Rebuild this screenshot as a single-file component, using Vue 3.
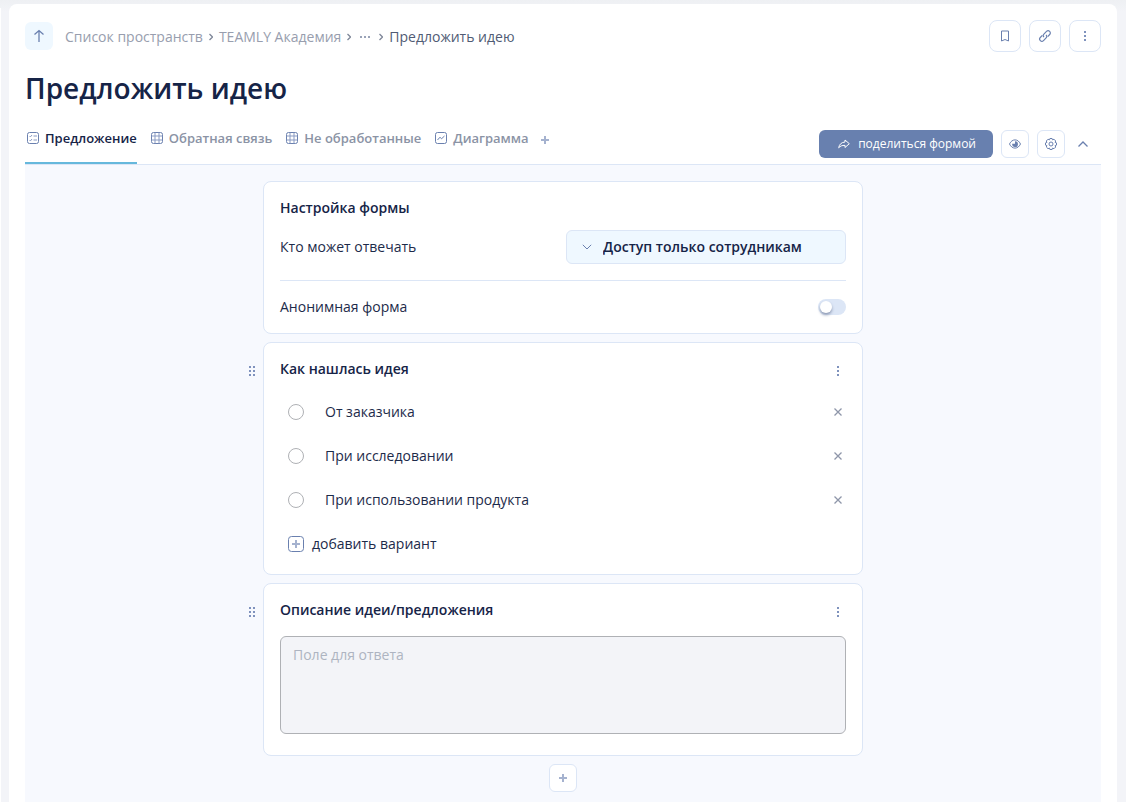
<script setup>
import { ref } from 'vue'

const tabs = [
  { name: 'Предложение', icon: 'form' },
  { name: 'Обратная связь', icon: 'table' },
  { name: 'Не обработанные', icon: 'table' },
  { name: 'Диаграмма', icon: 'chart' },
]
const active = ref(0)
const anonymous = ref(false)
const access = ref('staff')
const answer = ref('')
const found = ref('')
const options = ref(['От заказчика', 'При исследовании', 'При использовании продукта'])

function removeOption(i) {
  options.value.splice(i, 1)
}
function addOption() {
  options.value.push('Новый вариант')
}
</script>

<template>
  <div class="shell">
    <div class="sidebar-edge"></div>
    <main class="panel">
      <header class="top">
        <button class="up" type="button" aria-label="Наверх">
          <svg width="28" height="28" viewBox="0 0 28 28"><path class="medium" d="M14 20V8.500M9.500 12.500L14 8.500l4.500 4" /></svg>
        </button>
        <nav class="crumbs" aria-label="Навигация">
          <a href="#">Список пространств</a>
          <svg class="sep" width="4" height="8" viewBox="0 0 4 8"><path class="medium" d="M.5 1l3 3-3 3" /></svg>
          <a href="#">TEAMLY Академия</a>
          <svg class="sep" width="4" height="8" viewBox="0 0 4 8"><path class="medium" d="M.5 1l3 3-3 3" /></svg>
          <button class="dots" type="button" aria-label="Показать путь">
            <svg width="12" height="4" viewBox="0 0 12 4"><path d="M1 1h2v2H1zM5 1h2v2H5zM9 1h2v2H9z" /></svg>
          </button>
          <svg class="sep" width="4" height="8" viewBox="0 0 4 8"><path class="medium" d="M.5 1l3 3-3 3" /></svg>
          <a href="#" class="current">Предложить идею</a>
        </nav>
        <div class="actions">
          <button class="square" type="button" aria-label="В закладки">
            <svg width="12" height="12" viewBox="0 0 12 12"><path d="M2.500 1h7v10L6 9.500 2.500 11z" /></svg>
          </button>
          <button class="square" type="button" aria-label="Ссылка">
            <svg width="14" height="14" viewBox="0 0 14 14">
              <path class="link" d="M6 8.200c-1-1-1-2.200-.1-3.100l2.600-2.700a2.200 2.200 0 0 1 3.200 3.100L9.700 7.600" />
              <path class="link" d="M8 5.800c1 1 1 2.200.1 3.100l-2.600 2.700a2.200 2.200 0 0 1-3.200-3.100l2-2.100" />
            </svg>
          </button>
          <button class="square" type="button" aria-label="Меню">
            <svg class="solid" width="12" height="12" viewBox="0 0 12 12"><path d="M5 1h2v2H5zM5 5h2v2H5zM5 9h2v2H5z" /></svg>
          </button>
        </div>
      </header>

      <h1>Предложить идею</h1>

      <div class="tabbar">
        <div class="tabs" role="tablist">
          <button
            v-for="(tab, i) in tabs"
            :key="tab.name"
            class="tab"
            :class="{ active: i === active }"
            type="button"
            role="tab"
            :aria-selected="i === active"
            @click="active = i"
          >
            <svg v-if="tab.icon === 'form'" width="12" height="12" viewBox="0 0 12 12">
              <rect x=".5" y=".5" width="11" height="11" rx="2" />
              <path class="thin" d="M2.500 4l.9.900L5 3M2.500 8l.9.900L5 7M6.500 4H10M6.500 8H10" />
            </svg>
            <svg v-else-if="tab.icon === 'table'" width="12" height="12" viewBox="0 0 12 12">
              <rect x=".5" y=".5" width="11" height="11" rx="2" />
              <path class="thin" d="M4 .5v11M8 .5v11M.5 4h11M.5 8h11" />
            </svg>
            <svg v-else width="12" height="12" viewBox="0 0 12 12">
              <rect x=".5" y=".5" width="11" height="11" rx="2" />
              <path d="M2.500 8L5 5.200l1.500 1.600L9.500 4" />
            </svg>
            <span>{{ tab.name }}</span>
          </button>
          <button class="add-tab" type="button" aria-label="Добавить вкладку">
            <svg width="8" height="8" viewBox="0 0 8 8"><path class="plus" d="M4 0v8M0 4h8" /></svg>
          </button>
        </div>
        <div class="tools">
          <button class="share" type="button">
            <svg width="12" height="12" viewBox="0 0 12 12"><path d="M7 2l4.300 3.700L7 9.500V7.400C4 7.300 2.200 8 .7 9.800 1.200 6.500 3.300 4.300 7 4z" /></svg>
            поделиться формой
          </button>
          <button class="tool" type="button" aria-label="Просмотр">
            <svg width="12" height="12" viewBox="0 0 12 12">
              <path d="M.5 6C1.800 3.300 3.700 1.900 6 1.900S10.200 3.300 11.500 6C10.200 8.700 8.300 10.100 6 10.100S1.800 8.700.5 6z" />
              <path class="fill" d="M6 3.200v2.600H3.200A2.900 2.900 0 1 0 6 3.200z" />
            </svg>
          </button>
          <button class="tool" type="button" aria-label="Настройки">
            <svg width="12" height="12" viewBox="0 0 12 12">
              <path d="M4.900.5h2.200l.4 1.400 1.500-.7L10.700 3l-.6 1.400 1.400.5v2.200l-1.400.5.6 1.400L9 10.700l-1.500-.6-.4 1.400H4.900l-.4-1.400-1.500.6L1.300 9l.6-1.400L.5 7.100V4.900l1.400-.5L1.300 3 3 1.200l1.500.7z" />
              <circle cx="6" cy="6" r="2" />
            </svg>
          </button>
          <button class="collapse" type="button" aria-label="Свернуть">
            <svg width="12" height="12" viewBox="0 0 12 12"><path class="medium" d="M1.500 8.500L6 4l4.500 4.500" /></svg>
          </button>
        </div>
      </div>

      <section class="workspace">
        <div class="block">
          <div class="card">
            <h2>Настройка формы</h2>
            <div class="row access">
              <label for="access">Кто может отвечать</label>
              <div class="select">
                <select id="access" v-model="access">
                  <option value="staff">Доступ только сотрудникам</option>
                  <option value="all">Доступ для всех</option>
                </select>
                <svg width="10" height="6" viewBox="0 0 10 6"><path d="M.8.8L5 5 9.200.8" /></svg>
              </div>
            </div>
            <div class="row anonymous">
              <label for="anonymous">Анонимная форма</label>
              <input id="anonymous" v-model="anonymous" class="switch" type="checkbox" role="switch" />
            </div>
          </div>
        </div>

        <div class="block">
          <button class="grip" type="button" aria-label="Переместить">
            <svg width="8" height="10" viewBox="0 0 8 10"><path d="M1 0h2v2H1zM1 4h2v2H1zM1 8h2v2H1zM5 0h2v2H5zM5 4h2v2H5zM5 8h2v2H5z" /></svg>
          </button>
          <div class="card question">
            <div class="head">
              <h2>Как нашлась идея</h2>
              <button class="icon" type="button" aria-label="Меню вопроса">
                <svg class="solid" width="2" height="10" viewBox="0 0 2 10"><path d="M0 0h2v2H0zM0 4h2v2H0zM0 8h2v2H0z" /></svg>
              </button>
            </div>
            <ul>
              <li v-for="(option, i) in options" :key="i">
                <input :id="'option-' + i" v-model="found" type="radio" name="found" :value="option" />
                <label :for="'option-' + i">{{ option }}</label>
                <button class="icon remove" type="button" aria-label="Удалить вариант" @click="removeOption(i)">
                  <svg width="8" height="8" viewBox="0 0 8 8"><path class="medium" d="M.5.5l7 7M7.500.5l-7 7" /></svg>
                </button>
              </li>
            </ul>
            <button class="add-option" type="button" @click="addOption">
              <svg width="16" height="16" viewBox="0 0 16 16">
                <rect x=".5" y=".5" width="15" height="15" rx="3" />
                <path class="plus" d="M8 4v8M4 8h8" />
              </svg>
              добавить вариант
            </button>
          </div>
        </div>

        <div class="block">
          <button class="grip" type="button" aria-label="Переместить">
            <svg width="8" height="10" viewBox="0 0 8 10"><path d="M1 0h2v2H1zM1 4h2v2H1zM1 8h2v2H1zM5 0h2v2H5zM5 4h2v2H5zM5 8h2v2H5z" /></svg>
          </button>
          <div class="card text-question">
            <div class="head">
              <h2><label for="answer">Описание идеи/предложения</label></h2>
              <button class="icon" type="button" aria-label="Меню вопроса">
                <svg class="solid" width="2" height="10" viewBox="0 0 2 10"><path d="M0 0h2v2H0zM0 4h2v2H0zM0 8h2v2H0z" /></svg>
              </button>
            </div>
            <textarea id="answer" v-model="answer" placeholder="Поле для ответа" rows="4"></textarea>
          </div>
        </div>

        <button class="tool add-block" type="button" aria-label="Добавить блок">
          <svg width="8" height="8" viewBox="0 0 8 8"><path class="plus" d="M4 0v8M0 4h8" /></svg>
        </button>
      </section>
    </main>
  </div>
</template>

<style>
body {
  background: #f3f4f8;
}
</style>

<style scoped>
.shell {
  display: flex;
  gap: 8px;
  box-sizing: border-box;
  min-height: 100vh;
  padding: 4px 9px 0 0;
  background: linear-gradient(#eef0f3, #f3f4f8 12px);
  font: 14px/20px "Open Sans", "Noto Sans", sans-serif;
  color: #1d2b4a;
}
.sidebar-edge {
  width: 1px;
  margin-top: 4px;
  background: #fff;
}
.panel {
  display: flex;
  flex: 1;
  flex-direction: column;
  min-width: 0;
  padding: 16px 16px 0;
  border-radius: 8px 8px 0 0;
  background: #fff;
}
button {
  display: flex;
  align-items: center;
  justify-content: center;
  padding: 0;
  border: 0;
  background: none;
  font: inherit;
  color: inherit;
  cursor: pointer;
}
svg {
  flex: none;
  fill: none;
  stroke: #6a80af;
}
.solid,
.dots svg,
.grip svg {
  fill: #7f92bd;
  stroke: none;
}
.fill {
  fill: #6a80af;
  stroke: none;
}
.plus {
  stroke: #a5b2cf;
  stroke-width: 2;
}
.thin {
  stroke: #8a9bc3;
}
.link {
  stroke-width: 1.2;
}
.medium {
  stroke-width: 1.3;
}
.top {
  display: flex;
  align-items: center;
}
.up {
  border-radius: 6px;
  background: #eff8ff;
}
.crumbs {
  display: flex;
  flex: 1;
  align-items: center;
  gap: 6px;
  margin-left: 12px;
  padding-top: 2px;
  color: #989eae;
}
a {
  color: inherit;
  text-decoration: none;
}
.crumbs .current {
  color: #505b74;
}
.sep {
  stroke: #7f8799;
}
.dots {
  padding: 0 2px;
}
.dots svg {
  fill: #9aa3b8;
}
.actions {
  display: flex;
  gap: 8px;
}
.square {
  width: 32px;
  height: 32px;
  border: 1px solid #dce6f6;
  border-radius: 8px;
}
h1 {
  margin: 16px 0 0;
  font: 600 28px/40px "Open Sans", sans-serif;
  color: #162447;
}
.tabbar {
  display: flex;
  align-items: flex-start;
  justify-content: space-between;
  margin-top: 16px;
  border-bottom: 1px solid #dce6f6;
}
.tabs {
  display: flex;
  gap: 12px;
}
.tab {
  gap: 6px;
  padding: 4px 0 14px 2px;
  border-bottom: 2px solid transparent;
  font: 600 13px/20px "Open Sans", sans-serif;
  color: #8b93a5;
}
.tab.active {
  border-color: #66b8dc;
  color: #162447;
}
.add-tab {
  height: 32px;
}
.tools {
  display: flex;
  gap: 8px;
  padding: 6px 0;
}
.share {
  gap: 8px;
  height: 28px;
  padding: 0 17px 0 19px;
  border-radius: 6px;
  background: #6880af;
  font-size: 12px;
  font-weight: 500;
  color: #fff;
}
.share svg {
  stroke: #fff;
}
.tool {
  width: 28px;
  height: 28px;
  border: 1px solid #dce6f6;
  border-radius: 6px;
  background: #fff;
}
.collapse {
  width: 20px;
  margin-right: 8px;
}
.workspace {
  display: flex;
  flex: 1;
  flex-direction: column;
  align-items: center;
  gap: 8px;
  padding: 16px 0 10px;
  background: #f7f9fe;
}
.block {
  display: grid;
  grid-template-columns: 16px 1fr 16px;
  width: 100%;
  max-width: 632px;
}
.grip {
  align-self: start;
  width: 10px;
  margin-top: 24px;
}
.card {
  grid-column: 2;
  padding: 16px;
  border: 1px solid #dce6f6;
  border-radius: 8px;
  background: #fff;
}
h2 {
  margin: 0;
  font: 600 14px/20px "Open Sans", sans-serif;
  color: #162447;
}
.row,
.head {
  display: flex;
  align-items: center;
  justify-content: space-between;
}
.head {
  align-items: flex-end;
}
.access {
  margin-top: 12px;
}
.anonymous {
  margin-top: 16px;
  padding-top: 16px;
  border-top: 1px solid #dce6f6;
}
.select {
  position: relative;
  width: 280px;
}
.select svg {
  position: absolute;
  top: 14px;
  left: 16px;
  pointer-events: none;
}
select {
  width: 100%;
  height: 34px;
  padding: 0 36px;
  border: 1px solid #dce6f6;
  border-radius: 6px;
  appearance: none;
  background: #eff8ff;
  font: 600 14px/20px "Open Sans", sans-serif;
  color: #162447;
}
.switch {
  display: flex;
  align-items: center;
  width: 28px;
  height: 16px;
  margin: 0;
  padding: 2px;
  border-radius: 8px;
  appearance: none;
  background: #dce6f6;
}
.switch::before {
  width: 12px;
  height: 12px;
  border-radius: 50%;
  background: #fff;
  box-shadow: 0 2px 3px #8d99b3;
  content: "";
}
.switch:checked {
  justify-content: flex-end;
  background: #66b8dc;
}
.icon {
  width: 16px;
  height: 16px;
}
.question {
  padding-bottom: 8px;
}
ul {
  margin: 11px 0 0;
  padding: 0;
  list-style: none;
}
li {
  display: flex;
  align-items: center;
  height: 44px;
  padding-left: 8px;
}
li input {
  width: 16px;
  height: 16px;
  margin: 0 21px 0 0;
  border: 1px solid #afb1b5;
  border-radius: 50%;
  appearance: none;
  background: #fff;
}
li input:checked {
  border: 5px solid #6880af;
}
li label {
  flex: 1;
}
.remove svg {
  stroke: #8e96a9;
}
.add-option {
  gap: 8px;
  height: 44px;
  padding-left: 8px;
}
.text-question {
  padding-bottom: 21px;
}
textarea {
  display: block;
  box-sizing: border-box;
  width: 100%;
  height: 98px;
  margin-top: 16px;
  padding: 8px 12px;
  border: 1px solid #afb1b5;
  border-radius: 6px;
  background: #f3f4f8;
  font: inherit;
  color: inherit;
  resize: none;
}
textarea::placeholder {
  color: #aeb4c1;
}
</style>
